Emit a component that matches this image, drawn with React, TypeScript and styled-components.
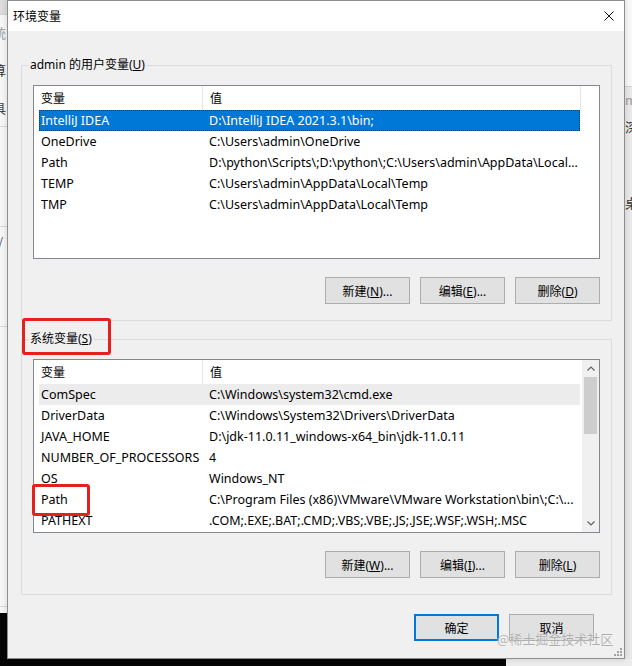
import React from "react";
import styled, { createGlobalStyle, css } from "styled-components";

const FONT = `"Noto Sans", "Noto Sans CJK SC", sans-serif`;

const GlobalStyle = createGlobalStyle`
  html, body { margin: 0; padding: 0; }
  body {
    width: 632px; height: 666px; overflow: hidden;
    font-family: ${FONT}; font-size: 12px; color: #000;
    background: #ececec;
  }
  * { box-sizing: border-box; }
`;

type Variable = {
  name: string;
  value: string;
  state?: "selected" | "hover";
  marked?: boolean;
};

const userVars: Variable[] = [
  { name: "IntelliJ IDEA", value: "D:\\IntelliJ IDEA 2021.3.1\\bin;", state: "selected" },
  { name: "OneDrive", value: "C:\\Users\\admin\\OneDrive" },
  { name: "Path", value: "D:\\python\\Scripts\\;D:\\python\\;C:\\Users\\admin\\AppData\\Local..." },
  { name: "TEMP", value: "C:\\Users\\admin\\AppData\\Local\\Temp" },
  { name: "TMP", value: "C:\\Users\\admin\\AppData\\Local\\Temp" },
];

const systemVars: Variable[] = [
  { name: "ComSpec", value: "C:\\Windows\\system32\\cmd.exe", state: "hover" },
  { name: "DriverData", value: "C:\\Windows\\System32\\Drivers\\DriverData" },
  { name: "JAVA_HOME", value: "D:\\jdk-11.0.11_windows-x64_bin\\jdk-11.0.11" },
  { name: "NUMBER_OF_PROCESSORS", value: "4" },
  { name: "OS", value: "Windows_NT" },
  { name: "Path", value: "C:\\Program Files (x86)\\VMware\\VMware Workstation\\bin\\;C:\\...", marked: true },
  { name: "PATHEXT", value: ".COM;.EXE;.BAT;.CMD;.VBS;.VBE;.JS;.JSE;.WSF;.WSH;.MSC" },
];

/* ---------- desktop / background windows ---------- */

const Desktop = styled.div`
  position: relative;
  width: 632px;
  height: 666px;
  overflow: hidden;
  background: #ececec;
`;

const LeftWindow = styled.div`
  position: absolute;
  left: 0;
  top: 0;
  width: 8px;
  height: 613px;
  overflow: hidden;
  background: #f6f6f6;
  display: flex;
  flex-direction: column;
`;

const RightWindow = styled.div`
  position: absolute;
  left: 624px;
  top: 0;
  width: 8px;
  height: 659px;
  overflow: hidden;
  background: #e9e9e9;
  display: flex;
  flex-direction: column;
`;

const PaneBar = styled.div<{ $h: number; $bg: string }>`
  flex: none;
  height: ${(p) => p.$h}px;
  background: ${(p) => p.$bg};
  border-bottom: 1px solid #d2d2d2;
`;

const Frag = styled.div<{ $h: number; $color: string; $shift: number; $line?: boolean }>`
  flex: none;
  height: ${(p) => p.$h}px;
  line-height: ${(p) => p.$h}px;
  font-family: "Noto Sans CJK SC", sans-serif;
  font-size: 13px;
  color: ${(p) => p.$color};
  white-space: nowrap;
  text-indent: ${(p) => p.$shift}px;
  ${(p) => p.$line && css`border-bottom: 1px solid #d6d6d6;`}
`;

const Taskbar = styled.div`
  position: absolute;
  left: 0;
  top: 613px;
  width: 506px;
  height: 53px;
  background: #050505;
`;

/* ---------- dialog ---------- */

const Dialog = styled.div`
  position: absolute;
  left: 7px;
  top: 0;
  width: 618px;
  height: 659px;
  border: 1px solid #8e8e8e;
  background: #f0f0f0;
  display: flex;
  flex-direction: column;
  box-shadow: 0 0 6px rgba(0, 0, 0, 0.15);
`;

const TitleBar = styled.div`
  flex: none;
  height: 30px;
  background: #fff;
  display: flex;
  align-items: center;
  padding-left: 5px;
`;

const Title = styled.span`
  font-family: "Noto Sans CJK SC", sans-serif;
  font-size: 12px;
  line-height: 30px;
`;

const CloseButton = styled.div`
  margin-left: auto;
  width: 30px;
  height: 30px;
  display: flex;
  align-items: center;
  justify-content: center;
`;

const Body = styled.div`
  flex: 1;
  display: flex;
  flex-direction: column;
  padding: 25px 12px 0 13px;
`;

const Group = styled.fieldset`
  margin: 0;
  min-width: 0;
  padding: 11px 11px 16px 11px;
  border: 1px solid #dcdcdc;
  display: flex;
  flex-direction: column;
  & + & { margin-top: 9px; }
`;

const Legend = styled.legend<{ $marked?: boolean }>`
  position: relative;
  margin-left: -4px;
  padding: 0 1px;
  line-height: 18px;
  font-size: 12px;
  ${(p) =>
    p.$marked &&
    css`
      &::after {
        content: "";
        position: absolute;
        left: -7px;
        top: -12px;
        right: -18px;
        bottom: -7px;
        border: 3px solid #e4211c;
        border-radius: 3px;
      }
    `}
`;

const ListView = styled.div`
  height: 174px;
  border: 1px solid #828790;
  background: #fff;
  display: flex;
`;

const ListContent = styled.div`
  flex: 1;
  min-width: 0;
  display: flex;
  flex-direction: column;
`;

const HeaderRow = styled.div`
  flex: none;
  height: 24px;
  display: flex;
`;

const HeaderCell = styled.div<{ $w?: number; $last?: boolean }>`
  ${(p) => (p.$w ? css`width: ${p.$w}px; flex: none;` : css`flex: 1;`)}
  padding-left: 7px;
  line-height: 24px;
  font-family: "Noto Sans CJK SC", sans-serif;
  border-right: ${(p) => (p.$last ? "none" : "1px solid #e5e5e5")};
`;

const Row = styled.div<{ $state?: "selected" | "hover"; $marked?: boolean }>`
  position: relative;
  flex: none;
  width: 541px;
  height: 21px;
  margin-left: 5px;
  display: flex;
  font-size: 12.5px;
  line-height: 21px;
  white-space: nowrap;
  ${(p) =>
    p.$state === "selected" &&
    css`
      background: #0078d7;
      color: #fff;
      outline: 1px dotted #0c3a66;
      outline-offset: -1px;
    `}
  ${(p) => p.$state === "hover" && css`background: #ececec;`}
  ${(p) =>
    p.$marked &&
    css`
      &::after {
        content: "";
        position: absolute;
        left: -7px;
        top: -5px;
        width: 52px;
        height: 26px;
        border: 3px solid #e4211c;
        border-radius: 3px;
      }
    `}
`;

const NameCell = styled.span`
  flex: none;
  width: 163px;
  padding-left: 2px;
  overflow: hidden;
`;

const ValueCell = styled.span`
  flex: 1;
  min-width: 0;
  padding-left: 7px;
  overflow: hidden;
`;

const ScrollBar = styled.div`
  flex: none;
  width: 17px;
  background: #f0f0f0;
  display: flex;
  flex-direction: column;
`;

const ScrollArrow = styled.div`
  flex: none;
  height: 17px;
  display: flex;
  align-items: center;
  justify-content: center;
`;

const ScrollTrack = styled.div`
  flex: 1;
  display: flex;
  flex-direction: column;
`;

const ScrollThumb = styled.div`
  height: 57px;
  margin: 0 2px;
  background: #cdcdcd;
`;

const ButtonRow = styled.div<{ $gapTop: number; $padRight?: number }>`
  display: flex;
  justify-content: flex-end;
  gap: 10px;
  margin-top: ${(p) => p.$gapTop}px;
  padding-right: ${(p) => p.$padRight ?? 0}px;
`;

const Button = styled.button<{ $primary?: boolean }>`
  width: 85px;
  height: 27px;
  padding: 0;
  margin: 0;
  font-family: ${FONT};
  font-size: 12px;
  color: #000;
  background: #e1e1e1;
  border: ${(p) => (p.$primary ? "2px solid #0078d7" : "1px solid #adadad")};
  border-radius: 0;
  u { text-underline-offset: 1px; }
`;

const Watermark = styled.div`
  position: absolute;
  left: 497px;
  top: 630px;
  font-family: "Noto Sans CJK SC", sans-serif;
  font-size: 13px;
  line-height: 18px;
  color: rgba(150, 150, 150, 0.75);
  text-shadow: 0 0 1px rgba(255, 255, 255, 0.9);
  white-space: nowrap;
`;

const Grip = styled.svg`
  position: absolute;
  left: 614px;
  top: 648px;
`;

/* ---------- parts ---------- */

const Chevron = ({ up }: { up?: boolean }) => (
  <svg width="8" height="5" viewBox="0 0 8 5">
    <polyline
      points={up ? "0.5,4.5 4,1 7.5,4.5" : "0.5,0.5 4,4 7.5,0.5"}
      fill="none"
      stroke="#606060"
      strokeWidth="1.2"
    />
  </svg>
);

const VarList = ({ vars, scroll }: { vars: Variable[]; scroll?: boolean }) => (
  <ListView>
    <ListContent>
      <HeaderRow>
        <HeaderCell $w={169}>变量</HeaderCell>
        <HeaderCell $w={378} $last={scroll}>值</HeaderCell>
        {!scroll && <HeaderCell $last />}
      </HeaderRow>
      {vars.map((v) => (
        <Row key={v.name + v.value} $state={v.state} $marked={v.marked}>
          <NameCell>{v.name}</NameCell>
          <ValueCell>{v.value}</ValueCell>
        </Row>
      ))}
    </ListContent>
    {scroll && (
      <ScrollBar>
        <ScrollArrow>
          <Chevron up />
        </ScrollArrow>
        <ScrollTrack>
          <ScrollThumb />
        </ScrollTrack>
        <ScrollArrow>
          <Chevron />
        </ScrollArrow>
      </ScrollBar>
    )}
  </ListView>
);

const Mn = ({ label, k, tail = "" }: { label: string; k: string; tail?: string }) => (
  <>
    {label}(<u>{k}</u>){tail}
  </>
);

export default function App() {
  return (
    <>
      <GlobalStyle />
      <Desktop>
        <LeftWindow>
          <PaneBar $h={15} $bg="#dcdcdc" />
          <Frag $h={36} $color="#9a9a9a" $shift={-7}>统</Frag>
          <Frag $h={38} $color="#333" $shift={-7}>算</Frag>
          <Frag $h={38} $color="#444" $shift={-7} $line>具</Frag>
          <Frag $h={100} $color="#444" $shift={-7} $line> </Frag>
          <Frag $h={30} $color="#555" $shift={-2}>/</Frag>
          <Frag $h={70} $color="#444" $shift={-7} $line> </Frag>
          <Frag $h={280} $color="#444" $shift={-7} $line> </Frag>
        </LeftWindow>
        <RightWindow>
          <PaneBar $h={87} $bg="#f8f8f8" />
          <Frag $h={26} $color="#9a9a9a" $shift={1}>m</Frag>
          <Frag $h={28} $color="#333" $shift={1}>深</Frag>
          <Frag $h={48} $color="#444" $shift={1}> </Frag>
          <Frag $h={28} $color="#333" $shift={1}>桌</Frag>
        </RightWindow>
        <Taskbar />

        <Dialog>
          <TitleBar>
            <Title>环境变量</Title>
            <CloseButton>
              <svg width="10" height="10" viewBox="0 0 10 10">
                <path d="M0.5 0.5 L9.5 9.5 M9.5 0.5 L0.5 9.5" stroke="#111" strokeWidth="1" />
              </svg>
            </CloseButton>
          </TitleBar>
          <Body>
            <Group>
              <Legend>
                admin 的用户变量(<u>U</u>)
              </Legend>
              <VarList vars={userVars} />
              <ButtonRow $gapTop={18}>
                <Button><Mn label="新建" k="N" tail="..." /></Button>
                <Button><Mn label="编辑" k="E" tail="..." /></Button>
                <Button><Mn label="删除" k="D" /></Button>
              </ButtonRow>
            </Group>
            <Group>
              <Legend $marked>
                系统变量(<u>S</u>)
              </Legend>
              <VarList vars={systemVars} scroll />
              <ButtonRow $gapTop={18}>
                <Button><Mn label="新建" k="W" tail="..." /></Button>
                <Button><Mn label="编辑" k="I" tail="..." /></Button>
                <Button><Mn label="删除" k="L" /></Button>
              </ButtonRow>
            </Group>
            <ButtonRow $gapTop={19} $padRight={18}>
              <Button $primary>确定</Button>
              <Button>取消</Button>
            </ButtonRow>
          </Body>
        </Dialog>

        <Watermark>@稀土掘金技术社区</Watermark>
        <Grip width="8" height="8" viewBox="0 0 8 8">
          {[
            [6, 0],
            [3, 3],
            [6, 3],
            [0, 6],
            [3, 6],
            [6, 6],
          ].map(([x, y]) => (
            <rect key={`${x}-${y}`} x={x} y={y} width="2" height="2" fill="#a0a0a0" />
          ))}
        </Grip>
      </Desktop>
    </>
  );
}
